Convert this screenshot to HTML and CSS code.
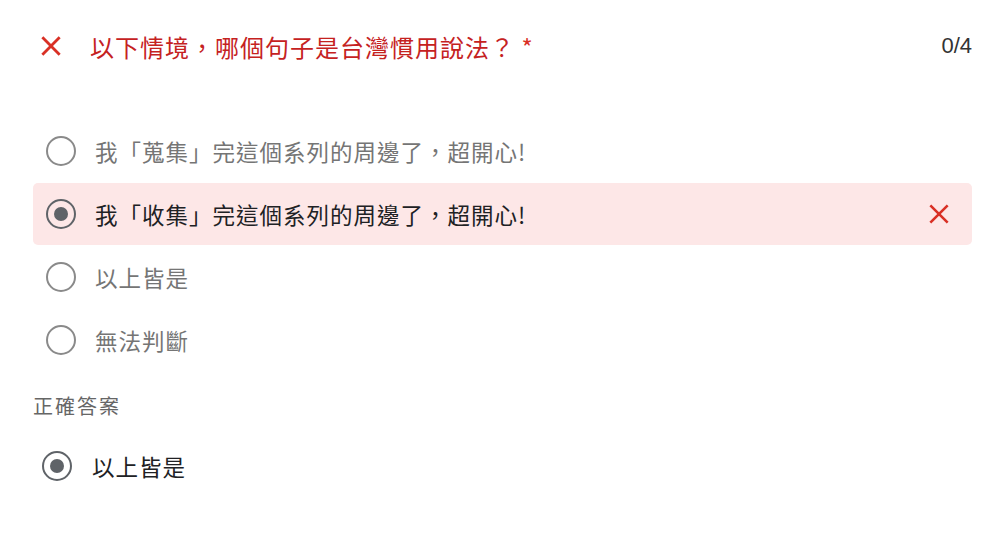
FILE: index.html
```html
<!doctype html>
<html lang="zh-Hant">
<head>
<meta charset="utf-8">
<title>測驗結果</title>
<link rel="stylesheet" href="styles.css">
</head>
<body>
<div class="qz">
  <div class="qh">
    <svg class="ic-x" viewBox="0 0 24 24" width="26" height="26"><path d="M4 4 L20 20 M20 4 L4 20" stroke="#d93025" stroke-width="2.6" fill="none"/></svg>
    <div class="qt">以下情境，哪個句子是台灣慣用說法？ <span class="req">*</span></div>
    <div class="sc">0/4</div>
  </div>

  <div class="opts">
    <div class="opt">
      <span class="rd"></span>
      <span class="ot">我「蒐集」完這個系列的周邊了，超開心!</span>
    </div>
    <div class="opt opt-wrong">
      <span class="rd rd-on"></span>
      <span class="ot">我「收集」完這個系列的周邊了，超開心!</span>
      <svg class="ic-x mk" viewBox="0 0 24 24" width="26" height="26"><path d="M4 4 L20 20 M20 4 L4 20" stroke="#d93025" stroke-width="2.4" fill="none"/></svg>
    </div>
    <div class="opt">
      <span class="rd"></span>
      <span class="ot">以上皆是</span>
    </div>
    <div class="opt">
      <span class="rd"></span>
      <span class="ot">無法判斷</span>
    </div>
  </div>

  <div class="ans">
    <div class="al">正確答案</div>
    <div class="opt opt-ans">
      <span class="rd rd-on"></span>
      <span class="ot">以上皆是</span>
    </div>
  </div>
</div>
</body>
</html>
```

FILE: styles.css
```css
body {
  margin: 0;
  background: #fff;
  font-family: "Noto Sans CJK TC", "Liberation Sans", sans-serif;
  color: #202124;
}

.qz {
  padding: 0 28px 0 33px;
}

/* header: mark, question, score */
.qh {
  display: flex;
  align-items: center;
  height: 92px;
  padding-left: 5px;
}
.qh .ic-x {
  flex: none;
}
.qt {
  flex: 1;
  margin-left: 26px;
  font-size: 24px;
  letter-spacing: 1px;
  color: #c5221f;
}
.req {
  color: #d93025;
}
.sc {
  font-family: "Liberation Sans", sans-serif;
  font-size: 22px;
  color: #333;
}

.opts {
  margin-top: 28px;
}

.opt {
  display: flex;
  align-items: center;
  height: 62px;
  margin-bottom: 1px;
  padding-left: 13px;
  padding-right: 20px;
  border-radius: 5px;
}
.opt-wrong {
  background: #fde7e7;
}
.opt-wrong .ot {
  color: #202124;
}
.opt .mk {
  margin-left: auto;
}

/* radio */
.rd {
  flex: none;
  box-sizing: border-box;
  width: 30px;
  height: 30px;
  border: 2px solid #8a8a8a;
  border-radius: 50%;
  display: flex;
  align-items: center;
  justify-content: center;
}
.rd-on {
  border-color: #5f6368;
}
.rd-on::after {
  content: "";
  width: 14px;
  height: 14px;
  border-radius: 50%;
  background: #5f6368;
}

.ot {
  margin-left: 19px;
  font-size: 22.5px;
  letter-spacing: 1px;
  color: #757575;
}

.ans {
  margin-top: 15px;
}
.al {
  font-size: 20px;
  letter-spacing: 2px;
  color: #666;
  line-height: 40px;
}
.opt-ans {
  padding-left: 9px;
  margin-top: 9px;
}
.opt-ans .ot {
  margin-left: 20px;
  color: #202124;
}
```
